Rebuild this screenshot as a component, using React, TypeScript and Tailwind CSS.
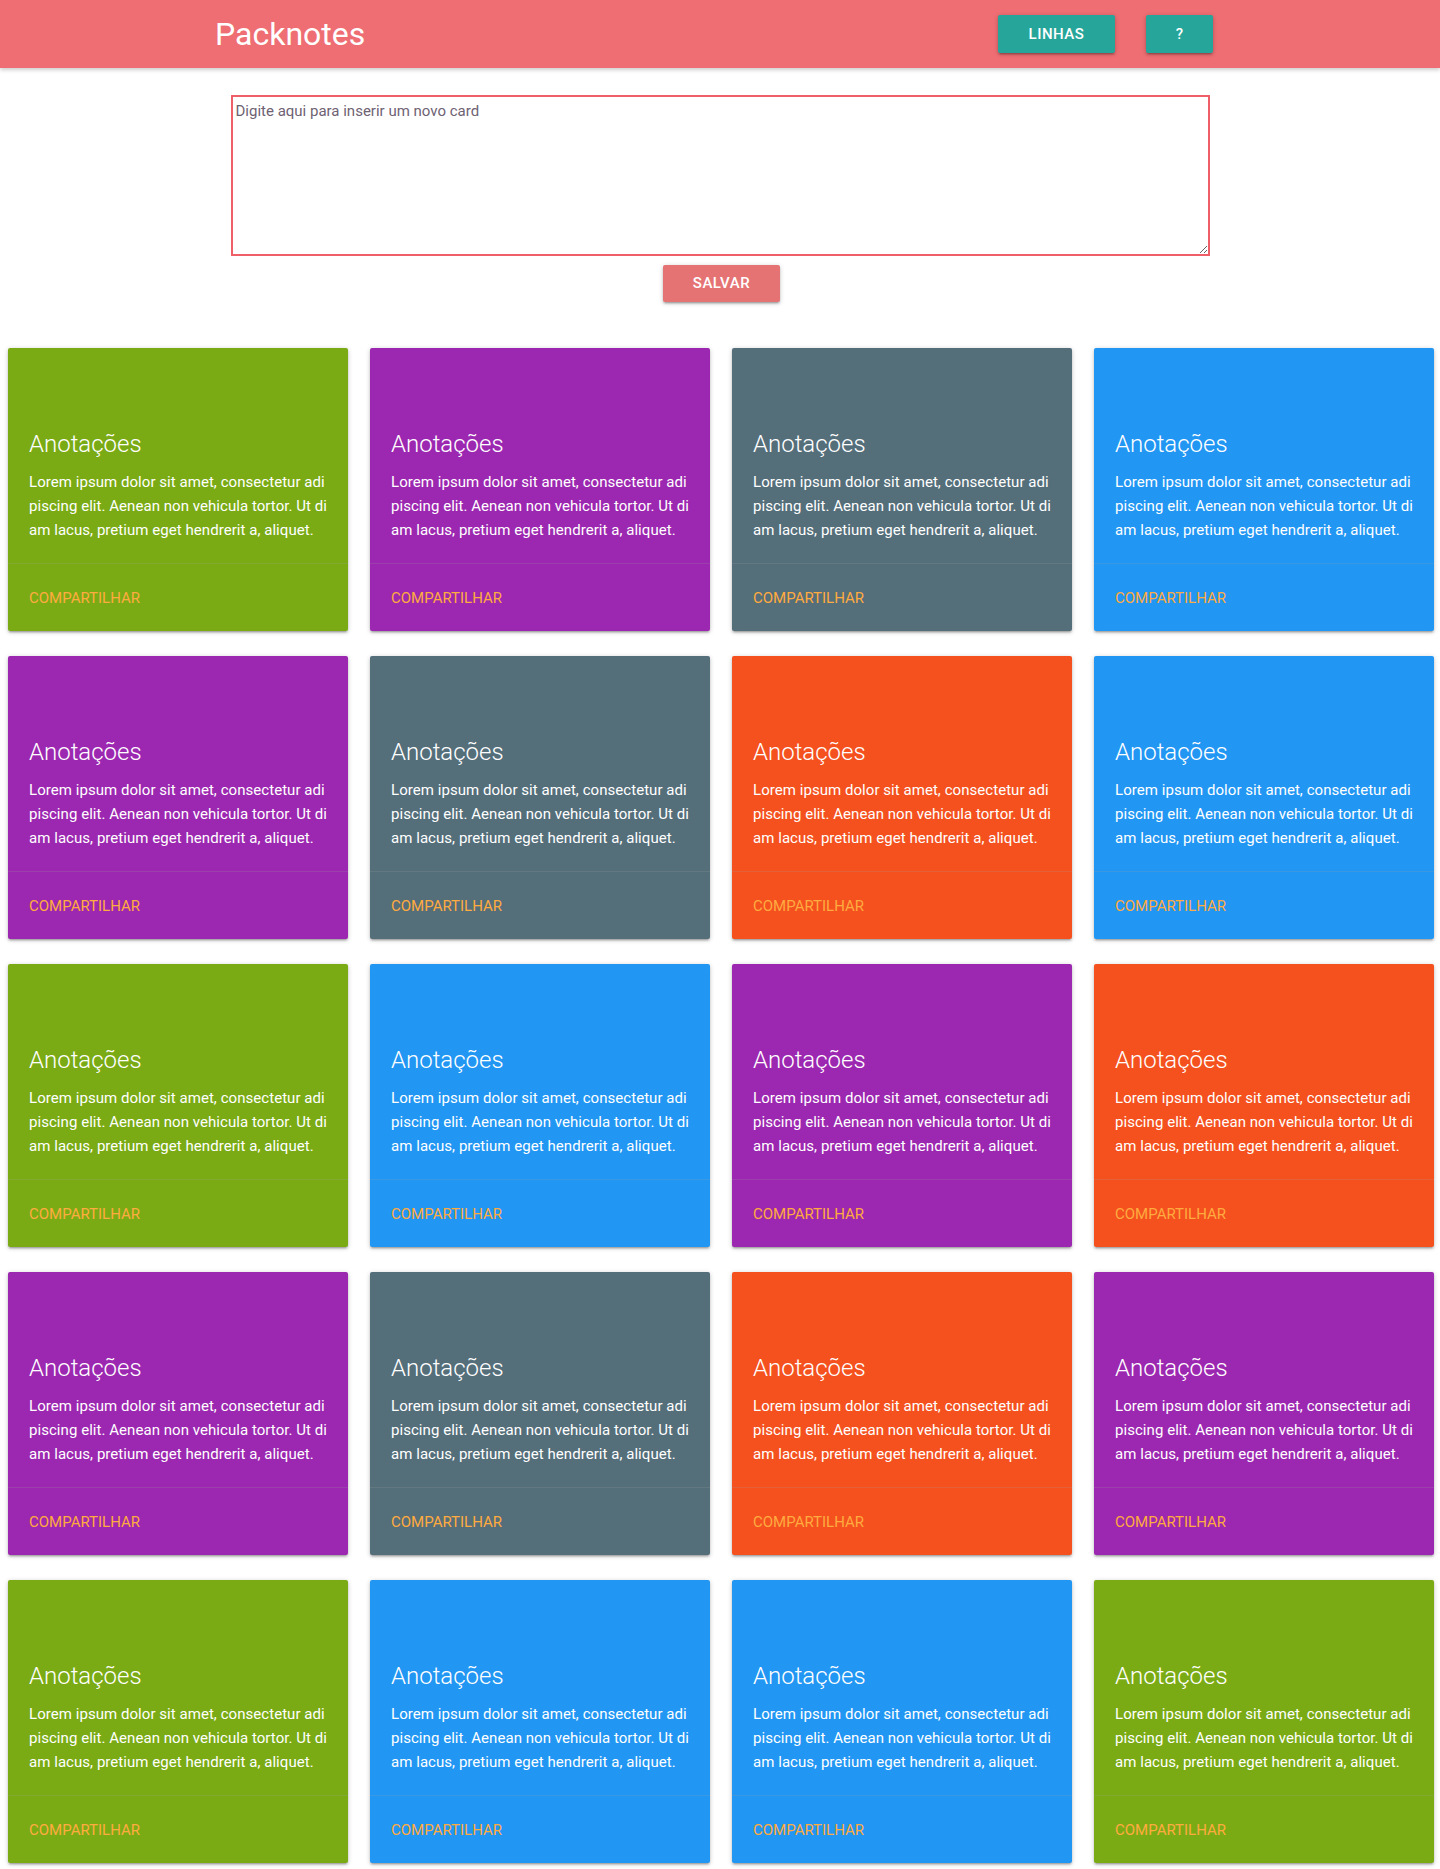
import React from "react";

const GREEN = "bg-[#7aab14]";
const PURPLE = "bg-[#9c27b0]";
const GREY = "bg-[#546e7a]";
const BLUE = "bg-[#2196f3]";
const ORANGE = "bg-[#f4511e]";

const colors: string[] = [
  GREEN, PURPLE, GREY, BLUE,
  PURPLE, GREY, ORANGE, BLUE,
  GREEN, BLUE, PURPLE, ORANGE,
  PURPLE, GREY, ORANGE, PURPLE,
  GREEN, BLUE, BLUE, GREEN,
];

function Card({ color }: { color: string }) {
  return (
    <div
      className={`${color} h-[283px] rounded-[2px] flex flex-col text-white shadow-[0_2px_2px_0_rgba(0,0,0,0.14),0_3px_1px_-2px_rgba(0,0,0,0.12),0_1px_5px_0_rgba(0,0,0,0.2)]`}
    >
      <div className="flex-1 flex flex-col justify-end px-[21px] pb-[21px]">
        <div className="text-[24px] leading-[32px] font-light mb-[10px]">Anotações</div>
        <p className="text-[15px] leading-[24px] font-normal tracking-[0.05px]">
          Lorem ipsum dolor sit amet, consectetur adi piscing elit. Aenean non vehicula tortor. Ut di am lacus, pretium eget hendrerit a, aliquet.
        </p>
      </div>
      <div className="h-[68px] border-t border-[rgba(160,160,160,0.2)] flex items-center px-[21px] pt-[2px]">
        <span className="text-[#ffab40] text-[15px] uppercase">Compartilhar</span>
      </div>
    </div>
  );
}

export default function App() {
  return (
    <div className="min-h-[1869px] bg-white font-['Roboto',_'Noto_Sans',_sans-serif]">
      <header className="h-[68px] bg-[#ee6e73] shadow-[0_2px_4px_rgba(0,0,0,0.2)] flex items-center relative z-10">
        <div className="pl-[215px] text-white text-[32px] leading-none">Packnotes</div>
        <div className="ml-auto mr-[227px] flex items-center gap-[31px]">
          <button className="h-[38px] w-[117px] rounded-[2px] bg-[#26a69a] text-white text-[15px] font-medium uppercase tracking-[0.5px] shadow-[0_2px_2px_0_rgba(0,0,0,0.14),0_3px_1px_-2px_rgba(0,0,0,0.12),0_1px_5px_0_rgba(0,0,0,0.2)]">
            Linhas
          </button>
          <button className="h-[38px] w-[67px] rounded-[2px] bg-[#26a69a] text-white text-[15px] font-medium shadow-[0_2px_2px_0_rgba(0,0,0,0.14),0_3px_1px_-2px_rgba(0,0,0,0.12),0_1px_5px_0_rgba(0,0,0,0.2)]">
            ?
          </button>
        </div>
      </header>

      <div className="flex flex-col items-center pt-[27px]">
        <textarea
          placeholder="Digite aqui para inserir um novo card"
          className="w-[979px] h-[161px] border-2 border-[#ef5f67] px-[3px] py-[4px] text-[15px] leading-[20px] placeholder:text-[#6e6272] outline-none resize-y"
        />
        <button className="mt-[9px] ml-[3px] h-[37px] w-[117px] rounded-[2px] bg-[#e57373] text-white text-[15px] font-medium uppercase tracking-[0.5px] shadow-[0_2px_2px_0_rgba(0,0,0,0.14),0_3px_1px_-2px_rgba(0,0,0,0.12),0_1px_5px_0_rgba(0,0,0,0.2)]">
          Salvar
        </button>
      </div>

      <div className="grid grid-cols-4 gap-x-[22px] gap-y-[25px] pl-[8px] pr-[6px] pt-[46px] pb-[4px]">
        {colors.map((c, i) => (
          <Card key={i} color={c} />
        ))}
      </div>
    </div>
  );
}
